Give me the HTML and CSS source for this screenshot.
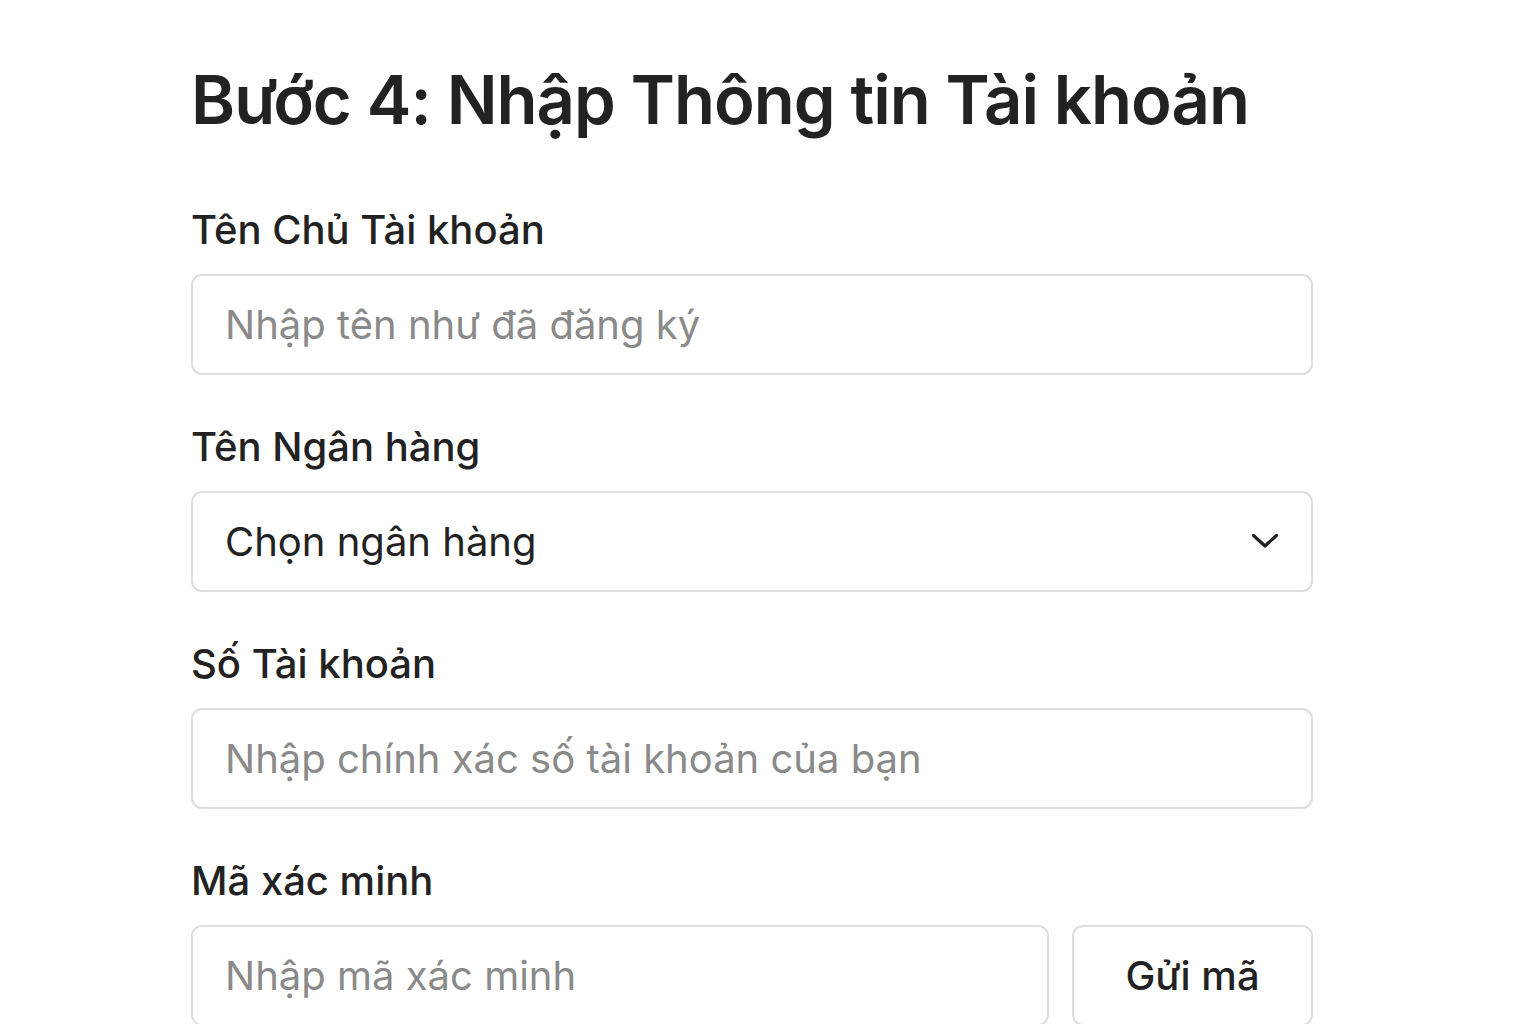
FILE: index.html
```html
<!DOCTYPE html>
<html lang="vi">
<head>
  <meta charset="UTF-8" />
  <title>Bước 4: Nhập Thông tin Tài khoản</title>
  <meta name="viewport" content="width=device-width, initial-scale=1" />
  <link rel="stylesheet" href="styles.css">
</head>
<body>
  <div class="container">
    <h1>Bước 4: Nhập Thông tin Tài khoản</h1>

    <div class="field">
      <label for="holder">Tên Chủ Tài khoản</label>
      <input id="holder" type="text" placeholder="Nhập tên như đã đăng ký" />
    </div>

    <div class="field">
      <label for="bank">Tên Ngân hàng</label>
      <div class="select-wrap">
        <select id="bank">
          <option>Chọn ngân hàng</option>
        </select>
        <svg class="chevron" width="28" height="18" viewBox="0 0 28 18">
          <path d="M2.5 3.5 L14 14 L25.5 3.5" fill="none" stroke="#222" stroke-width="3.2" stroke-linecap="round" stroke-linejoin="round"/>
        </svg>
      </div>
    </div>

    <div class="field">
      <label for="number">Số Tài khoản</label>
      <input id="number" type="text" placeholder="Nhập chính xác số tài khoản của bạn" />
    </div>

    <div class="field">
      <label for="code">Mã xác minh</label>
      <div class="code-row">
        <input id="code" type="text" placeholder="Nhập mã xác minh" />
        <button type="button">Gửi mã</button>
      </div>
    </div>
  </div>
</body>
</html>
```

FILE: styles.css
```css
body {
  background: #fff;
  color: #222;
  font-family: Inter, 'Noto Sans', Arial, sans-serif;
  margin: 0;
}
.container {
  width: 1122px;
  margin: 0 0 0 191px;
  padding-top: 60px;
}
h1 {
  font-size: 67px;
  line-height: 80px;
  font-weight: 600;
  letter-spacing: -1px;
  white-space: nowrap;
  margin: 0 0 66px 0;
  color: #222;
}
.field { margin-bottom: 48px; }
label {
  display: block;
  font-size: 40px;
  line-height: 48px;
  font-weight: 500;
  margin-bottom: 20px;
}
input, select, button {
  box-sizing: border-box;
  height: 101px;
  border: 2px solid #dedede;
  border-radius: 11px;
  background: #fff;
  font-family: inherit;
  font-size: 40px;
  color: #222;
  padding: 0 32px;
  outline: none;
}
input { width: 100%; }
input::placeholder { color: #8a8a8a; opacity: 1; }
.select-wrap { position: relative; }
select {
  width: 100%;
  appearance: none;
  -webkit-appearance: none;
}
.chevron { position: absolute; right: 34px; top: 41px; }
.code-row { display: flex; gap: 23px; }
.code-row input { flex: 1; }
.code-row button {
  width: 241px;
  flex: none;
  font-weight: 500;
  padding: 0;
}
```
